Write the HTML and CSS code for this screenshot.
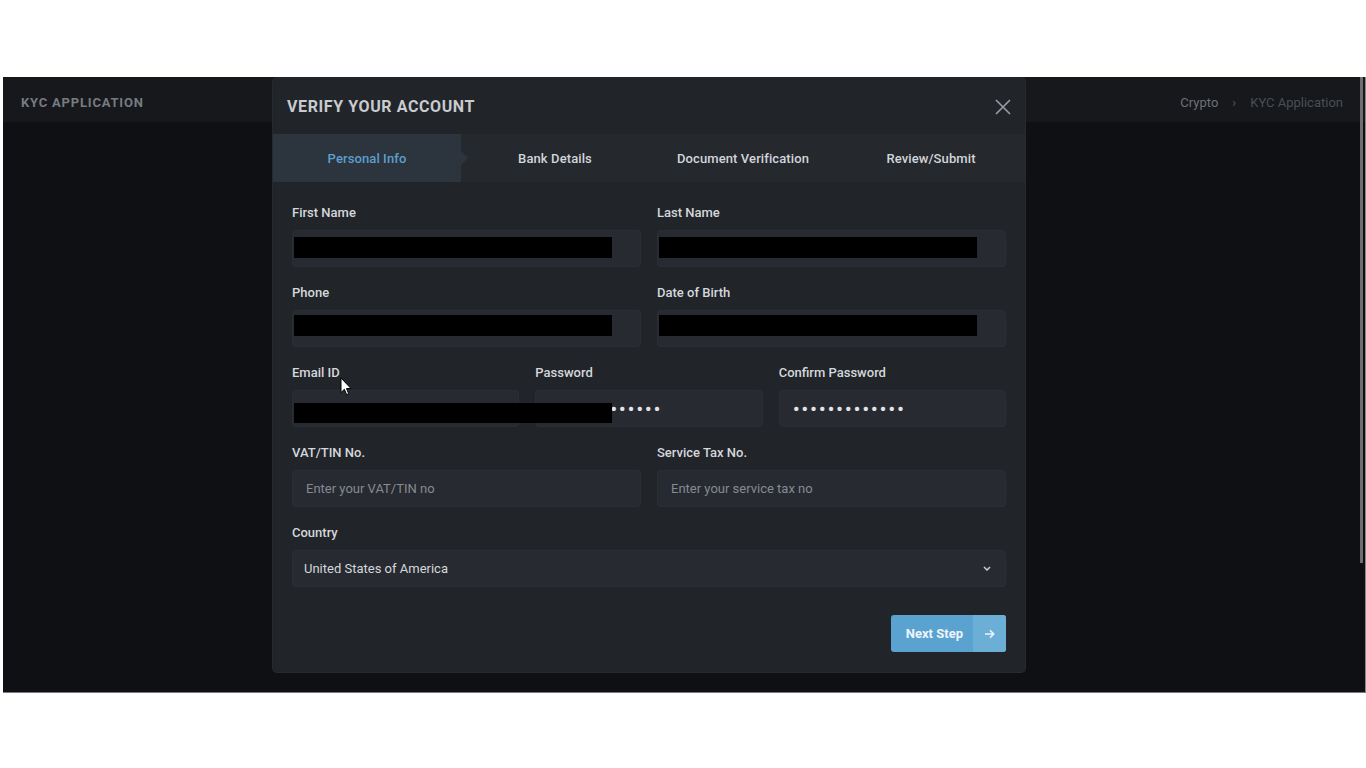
FILE: index.html
```html
<!DOCTYPE html>
<html lang="en">
<head>
    <meta charset="UTF-8">
    <meta name="viewport" content="width=device-width, initial-scale=1">
    <title>KYC Application</title>
    <link rel="stylesheet" href="styles.css">
</head>
<body>
    <div class="screen">
        <div class="topbar">
            <div class="page-title">KYC APPLICATION</div>
            <div class="crumbs">
                <span class="crumb">Crypto</span>
                <span class="crumb-sep">&#8250;</span>
                <span class="crumb current">KYC Application</span>
            </div>
        </div>
        <div class="scroll-thumb"></div>

        <div class="modal">
            <div class="modal-head">
                <h2>VERIFY YOUR ACCOUNT</h2>
                <button class="close" aria-label="Close">
                    <svg width="16" height="16" viewBox="0 0 16 16"><path d="M1 1L15 15M15 1L1 15" stroke="#9a9ea4" stroke-width="1.6" fill="none"/></svg>
                </button>
            </div>
            <div class="tabs">
                <div class="tab active">Personal Info</div>
                <div class="tab">Bank Details</div>
                <div class="tab">Document Verification</div>
                <div class="tab">Review/Submit</div>
            </div>

            <form class="form">
                <div class="row two">
                    <div class="field">
                        <label>First Name</label>
                        <div class="box"><input type="text"><span class="redact r1"></span></div>
                    </div>
                    <div class="field">
                        <label>Last Name</label>
                        <div class="box"><input type="text"><span class="redact r1"></span></div>
                    </div>
                </div>
                <div class="row two">
                    <div class="field">
                        <label>Phone</label>
                        <div class="box"><input type="text"><span class="redact r2"></span></div>
                    </div>
                    <div class="field">
                        <label>Date of Birth</label>
                        <div class="box"><input type="text"><span class="redact r2"></span></div>
                    </div>
                </div>
                <div class="row three">
                    <div class="field">
                        <label>Email ID</label>
                        <div class="box"><input type="text"><span class="redact r3"></span></div>
                    </div>
                    <div class="field">
                        <label>Password</label>
                        <div class="box"><input type="password" value="abcdefghijklm"></div>
                    </div>
                    <div class="field">
                        <label>Confirm Password</label>
                        <div class="box"><input type="password" value="abcdefghijklm"></div>
                    </div>
                </div>
                <div class="row two">
                    <div class="field">
                        <label>VAT/TIN No.</label>
                        <div class="box"><input type="text" placeholder="Enter your VAT/TIN no"></div>
                    </div>
                    <div class="field">
                        <label>Service Tax No.</label>
                        <div class="box"><input type="text" placeholder="Enter your service tax no"></div>
                    </div>
                </div>
                <div class="row">
                    <div class="field">
                        <label>Country</label>
                        <div class="box">
                            <select>
                                <option>United States of America</option>
                            </select>
                            <svg class="chevron" width="8" height="5" viewBox="0 0 8 5"><path d="M1 1L4 4L7 1" stroke="#c9ccd1" stroke-width="1.5" fill="none"/></svg>
                        </div>
                    </div>
                </div>
                <div class="actions">
                    <button type="button" class="next">
                        <span class="next-label">Next Step</span>
                        <span class="next-icon">
                            <svg width="11" height="10" viewBox="0 0 11 10"><path d="M1 5H9.5M6 1.3L9.7 5L6 8.7" stroke="#eef5fa" stroke-width="1.6" fill="none"/></svg>
                        </span>
                    </button>
                </div>
            </form>
        </div>

        <svg class="cursor" width="12" height="19" viewBox="0 0 12 19"><path d="M1 1V15.5L4.4 12.3L6.6 17.6L8.7 16.7L6.5 11.5H11Z" fill="#fff" stroke="#000" stroke-width="1"/></svg>
    </div>
</body>
</html>
```

FILE: styles.css
```css
body {
    margin: 0;
    background: #fff;
    font-family: Roboto, "Liberation Sans", Arial, sans-serif;
}

.screen {
    position: relative;
    margin: 77px 0 0 3px;
    width: 1362px;
    height: 615px;
    background: #0e1013;
    border-bottom: 1px solid #7a7a7a;
    border-right: 1px solid #8a8a8a;
    overflow: hidden;
}

.topbar {
    height: 45px;
    box-sizing: border-box;
    padding: 5px 22px 0 18px;
    background: #16181b;
    display: flex;
    justify-content: space-between;
    align-items: center;
}

.page-title {
    font-size: 13px;
    font-weight: 700;
    color: #767b83;
    letter-spacing: 0.8px;
}

.crumbs {
    display: flex;
    align-items: center;
    gap: 14px;
    font-size: 13px;
}

.crumb {
    color: #6c7179;
}

.crumb.current {
    color: #4a4f57;
}

.crumb-sep {
    color: #575c64;
    font-size: 13px;
}

.scroll-thumb {
    position: absolute;
    right: 2px;
    top: 0;
    width: 3px;
    height: 486px;
    background: #6f6f6f;
}

/* modal */
.modal {
    position: absolute;
    left: 269px;
    top: 0;
    width: 754px;
    box-sizing: border-box;
    background: #212429;
    border: 1px solid #26292e;
    border-top: none;
    border-radius: 5px;
}

.modal-head {
    height: 57px;
    display: flex;
    align-items: center;
    justify-content: space-between;
    padding: 2px 14px 0 14px;
    box-sizing: border-box;
}

.modal-head h2 {
    margin: 0;
    font-size: 16px;
    font-weight: 700;
    color: #c8cbd0;
    letter-spacing: 0.6px;
}

.close {
    background: none;
    border: none;
    padding: 0;
    display: flex;
    cursor: pointer;
}

.tabs {
    display: grid;
    grid-template-columns: repeat(4, 1fr);
    height: 48px;
    background: #25282d;
}

.tab {
    position: relative;
    display: flex;
    align-items: center;
    justify-content: center;
    font-size: 13px;
    font-weight: 500;
    letter-spacing: 0.1px;
    color: #d2d5da;
}

.tab.active {
    background: #2c343e;
    color: #5c9fcc;
}

.tab.active::after {
    content: "";
    position: absolute;
    right: -7px;
    top: 17px;
    border-top: 7px solid transparent;
    border-bottom: 7px solid transparent;
    border-left: 7px solid #2c343e;
}

.form {
    padding: 22px 19px 20px;
}

.row {
    display: grid;
    gap: 16px;
    margin-bottom: 17px;
}

.row.two {
    grid-template-columns: 1fr 1fr;
}

.row.three {
    grid-template-columns: 1fr 1fr 1fr;
}

.field label {
    display: block;
    font-size: 13px;
    font-weight: 500;
    line-height: 18px;
    color: #d4d7dc;
    margin-bottom: 8px;
}

.box {
    position: relative;
}

.box input,
.box select {
    display: block;
    width: 100%;
    box-sizing: border-box;
    height: 37px;
    padding: 0 13px;
    background: #272a30;
    border: 1px solid #2b2e34;
    border-radius: 4px;
    color: #d4d7dc;
    font-family: inherit;
    font-size: 13px;
    outline: none;
}

.box input::placeholder {
    color: #868a91;
}

.box input[type="password"] {
    font-size: 21px;
    letter-spacing: 1.6px;
    padding-left: 13px;
    color: #e2e4e8;
}

.box select {
    appearance: none;
    padding: 0 11px;
    color: #d4d7dc;
}

.chevron {
    position: absolute;
    right: 15px;
    top: 16px;
}

.redact {
    position: absolute;
    left: 2px;
    width: 318px;
    background: #000;
    z-index: 2;
}

.r1 {
    top: 7px;
    height: 21px;
}

.r2 {
    top: 5px;
    height: 21px;
}

.r3 {
    top: 13px;
    height: 20px;
}

.actions {
    display: flex;
    justify-content: flex-end;
    margin-top: 28px;
}

.next {
    display: flex;
    height: 37px;
    padding: 0;
    border: none;
    border-radius: 3px;
    overflow: hidden;
    background: #5aa2cf;
    font-family: inherit;
    cursor: pointer;
}

.next-label {
    display: flex;
    align-items: center;
    padding: 0 10px 0 15px;
    font-size: 13px;
    font-weight: 700;
    color: #eef5fa;
}

.next-icon {
    display: flex;
    align-items: center;
    justify-content: center;
    width: 33px;
    background: #6cafd6;
}

.cursor {
    position: absolute;
    left: 337px;
    top: 300px;
    z-index: 5;
}
```
